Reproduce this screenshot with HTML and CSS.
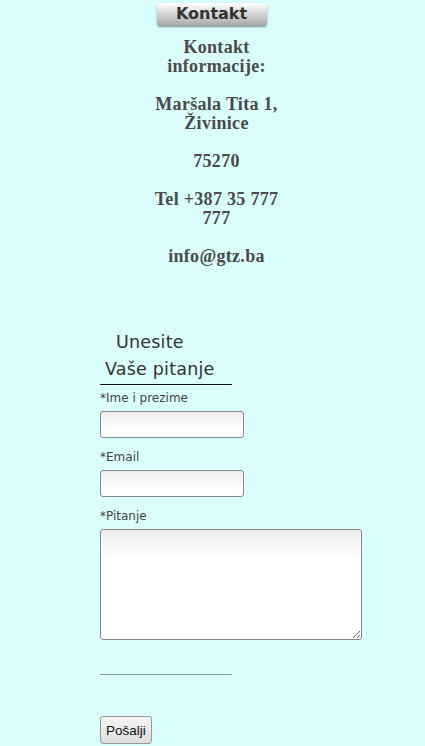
FILE: index.html
```html
<!DOCTYPE html>
<html>
<head>
<meta charset="utf-8">
<link rel="stylesheet" href="styles.css">
</head>
<body>
<div class="top">
  <div class="tab">Kontakt</div>
  <div class="info">
    <p>Kontakt informacije:</p>
    <p>Maršala Tita 1, Živinice</p>
    <p>75270</p>
    <p>Tel +387 35 777 777</p>
    <p>info@gtz.ba</p>
  </div>
</div>
<form class="form">
  <div class="legend"><span class="l1">Unesite</span><span class="l2">Vaše pitanje</span></div>
  <label class="lbl">*Ime i prezime</label>
  <input class="field" type="text">
  <label class="lbl">*Email</label>
  <input class="field" type="text">
  <label class="lbl">*Pitanje</label>
  <textarea class="area"></textarea>
  <div class="rule"></div>
  <button class="send" type="button">Pošalji</button>
</form>
</body>
</html>
```
FILE: styles.css
```css
html, body {
  margin: 0;
  padding: 0;
  background: #dbffff;
}
body {
  width: 425px;
  height: 746px;
  overflow: hidden;
}
.top {
  display: flex;
  flex-direction: column;
  align-items: center;
}
.tab {
  margin-top: 3px;
  margin-right: 2px;
  width: 110px;
  height: 23px;
  box-sizing: border-box;
  text-align: center;
  font-family: "DejaVu Sans", Verdana, sans-serif;
  font-weight: bold;
  font-size: 16px;
  line-height: 22px;
  color: #333;
  border-radius: 3px;
  background: linear-gradient(#ffffff 0%, #d8d8d8 45%, #a6a6a6 100%);
  box-shadow: 0 1px 2px rgba(0,0,0,0.45);
}
.info {
  width: 140px;
  margin-top: 12px;
  margin-left: 8px;
  text-align: center;
  font-family: "Liberation Serif", "Times New Roman", serif;
  font-weight: bold;
  font-size: 18px;
  line-height: 19px;
  letter-spacing: 0.3px;
  color: #4a4a4a;
}
.info p {
  margin: 0 0 19px 0;
}
.form {
  margin: 44px 0 0 100px;
  width: 262px;
  display: flex;
  flex-direction: column;
  align-items: flex-start;
  font-family: "DejaVu Sans", Verdana, sans-serif;
}
.legend {
  width: 132px;
  border-bottom: 1px solid #111;
  display: flex;
  flex-direction: column;
  font-size: 17.5px;
  line-height: 27px;
  letter-spacing: 0.2px;
  color: #333;
  padding-bottom: 1px;
}
.l1 { padding-left: 16px; }
.l2 { padding-left: 5px; }
.lbl {
  font-size: 12px;
  line-height: 16px;
  color: #444;
  margin-top: 5px;
  margin-bottom: 5px;
}
.field {
  width: 144px;
  height: 27px;
  box-sizing: border-box;
  margin: 0 0 6px 0;
  border: 1px solid #888;
  border-radius: 3px;
  background: linear-gradient(#ececec, #ffffff 70%);
}
.area {
  width: 262px;
  height: 111px;
  box-sizing: border-box;
  margin: 0;
  border: 1px solid #888;
  border-radius: 3px;
  background: linear-gradient(#ececec 0%, #ffffff 25%);
}
.rule {
  width: 132px;
  height: 1px;
  background: #8a9a9a;
  margin-top: 34px;
}
.send {
  margin-top: 41px;
  height: 28px;
  padding: 0 5px;
  font-family: "Liberation Sans", Arial, sans-serif;
  font-size: 13.5px;
  color: #111;
  border: 1px solid #999;
  border-radius: 3px;
  background: linear-gradient(#f6f6f6, #dddddd);
}
```
